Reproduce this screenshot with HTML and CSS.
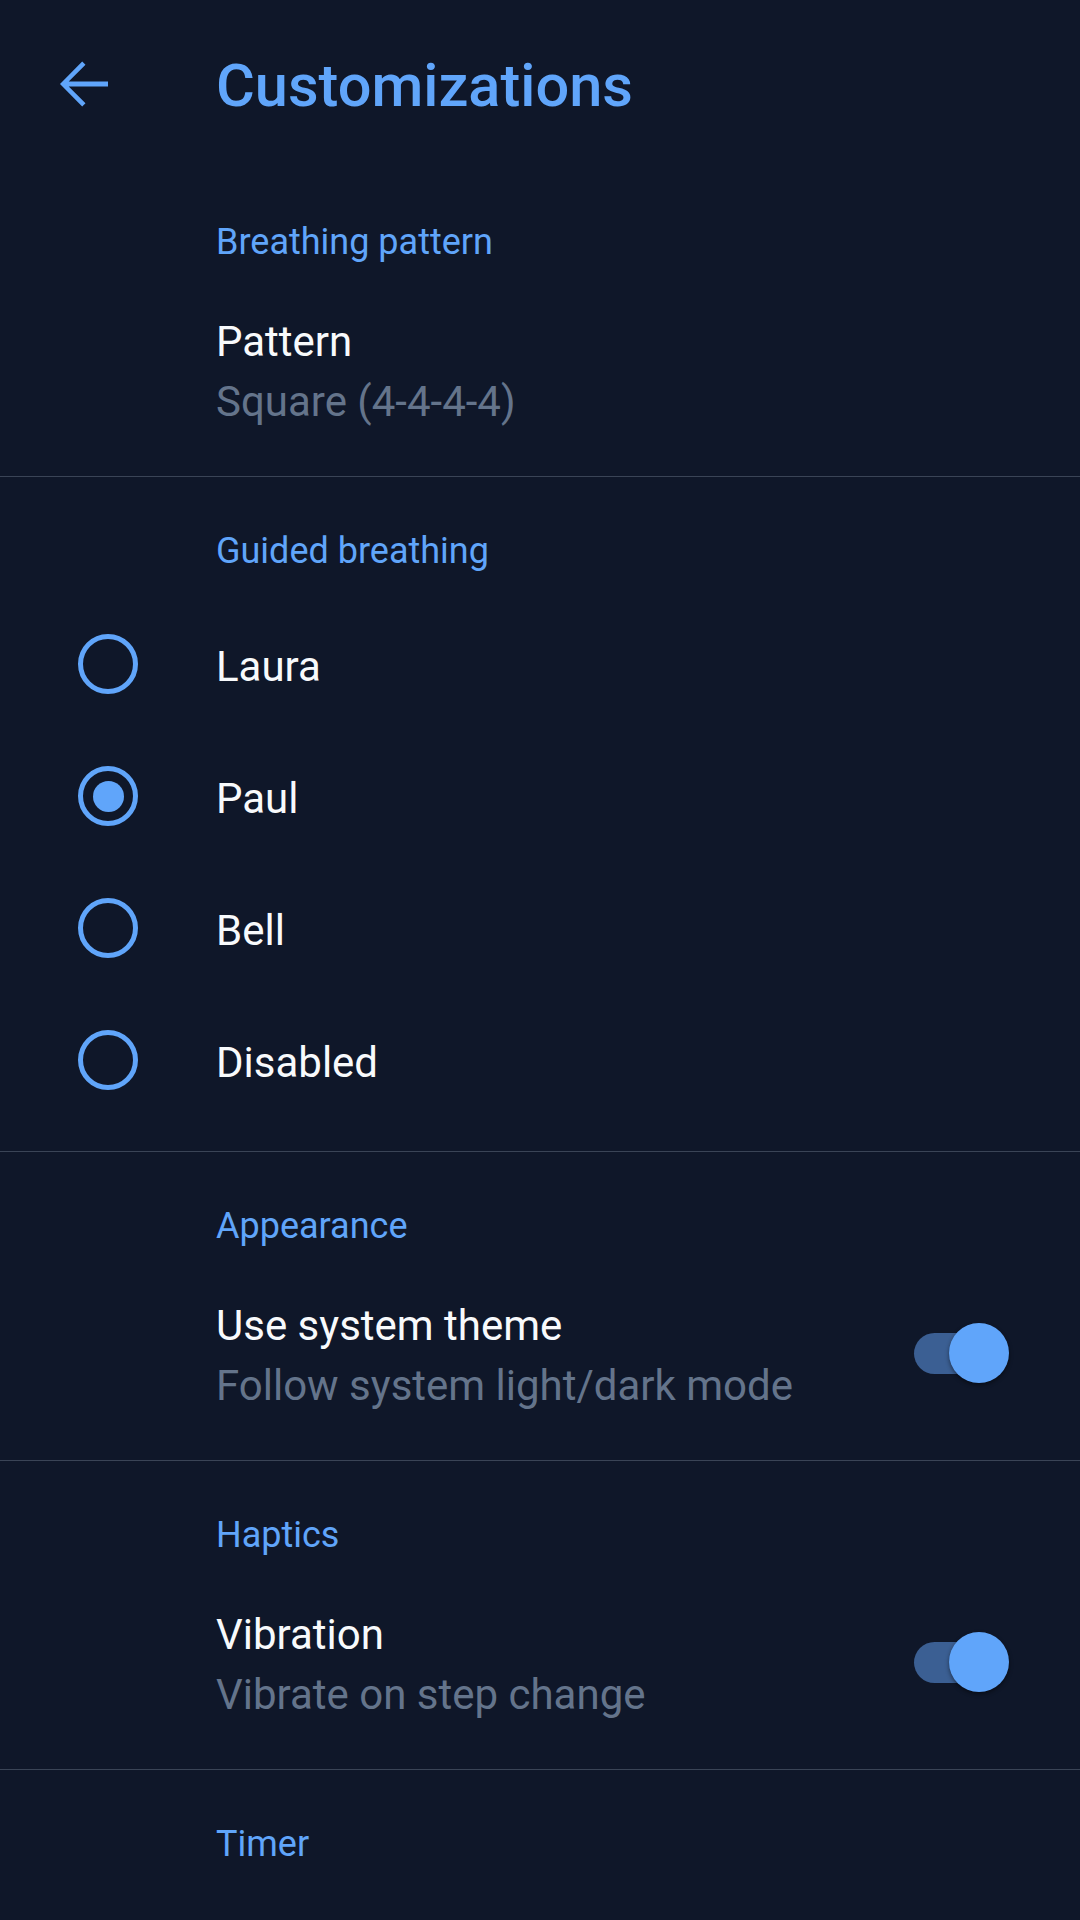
FILE: index.html
```html
<!DOCTYPE html>
<html lang="en">
<head>
<meta charset="utf-8">
<title>Customizations</title>
<link rel="stylesheet" href="styles.css">
</head>
<body>
<div class="screen">
  <header class="appbar">
    <button class="back" aria-label="Back">
      <svg viewBox="0 0 24 24" width="72" height="72"><path d="M20 11.2H6.9l5.6-5.6L11.4 4.5 4 12l7.4 7.5 1.1-1.1-5.6-5.6H20z" fill="#60a5fa"/></svg>
    </button>
    <h1 class="title">Customizations</h1>
  </header>

  <section class="group">
    <div class="group-label">Breathing pattern</div>
    <div class="pref">
      <div class="pref-text">
        <div class="pref-title">Pattern</div>
        <div class="pref-summary">Square (4-4-4-4)</div>
      </div>
    </div>
  </section>

  <section class="group">
    <div class="group-label">Guided breathing</div>
    <div class="radio-list">
      <div class="radio-row"><span class="radio"></span><span class="radio-label">Laura</span></div>
      <div class="radio-row"><span class="radio checked"></span><span class="radio-label">Paul</span></div>
      <div class="radio-row"><span class="radio"></span><span class="radio-label">Bell</span></div>
      <div class="radio-row"><span class="radio"></span><span class="radio-label">Disabled</span></div>
    </div>
  </section>

  <section class="group">
    <div class="group-label">Appearance</div>
    <div class="pref">
      <div class="pref-text">
        <div class="pref-title">Use system theme</div>
        <div class="pref-summary">Follow system light/dark mode</div>
      </div>
      <span class="switch on"><span class="track"></span><span class="thumb"></span></span>
    </div>
  </section>

  <section class="group">
    <div class="group-label">Haptics</div>
    <div class="pref">
      <div class="pref-text">
        <div class="pref-title">Vibration</div>
        <div class="pref-summary">Vibrate on step change</div>
      </div>
      <span class="switch on"><span class="track"></span><span class="thumb"></span></span>
    </div>
  </section>

  <section class="group last">
    <div class="group-label">Timer</div>
  </section>
</div>
</body>
</html>
```

FILE: styles.css
```css
* { box-sizing: border-box; }
html, body {
  margin: 0;
  padding: 0;
  background: #0f1729;
}
body {
  font-family: Roboto, "Noto Sans", "Liberation Sans", sans-serif;
  color: #f8fafc;
  width: 1080px;
  height: 1920px;
  overflow: hidden;
}
.screen {
  display: flex;
  flex-direction: column;
}
.appbar {
  height: 168px;
  display: flex;
  align-items: center;
}
.back {
  width: 72px;
  height: 72px;
  margin-left: 48px;
  padding: 0;
  border: 0;
  background: none;
  display: flex;
}
.title {
  margin: 0 0 0 96px;
  padding-top: 4px;
  font-size: 59.5px;
  font-weight: 500;
  line-height: 69px;
  color: #60a5fa;
}
.group {
  padding-top: 50px;
  border-bottom: 1px solid #3a4456;
}
.group.last { border-bottom: 0; }
.group-label {
  padding-left: 216px;
  font-size: 36px;
  line-height: 48px;
  color: #60a5fa;
}
.pref {
  display: flex;
  align-items: center;
  padding: 46px 71px 44px 216px;
}
.pref-text {
  flex: 1;
}
.pref-title {
  font-size: 42px;
  line-height: 60px;
  color: #f8fafc;
}
.pref-summary {
  font-size: 42px;
  line-height: 60px;
  color: #64748b;
}
.radio-list {
  padding: 23px 0 25px;
  display: flex;
  flex-direction: column;
}
.radio-row {
  height: 132px;
  display: flex;
  align-items: center;
}
.radio {
  width: 60px;
  height: 60px;
  margin-left: 78px;
  border: 5.5px solid #60a5fa;
  border-radius: 50%;
  display: flex;
  align-items: center;
  justify-content: center;
}
.radio.checked::after {
  content: "";
  width: 31px;
  height: 31px;
  border-radius: 50%;
  background: #60a5fa;
}
.radio-label {
  margin-left: 78px;
  padding-top: 6px;
  font-size: 42px;
  line-height: 60px;
  color: #f8fafc;
}
.switch {
  position: relative;
  width: 95px;
  height: 60px;
  margin-top: -6px;
  flex: none;
}
.track {
  position: absolute;
  left: 0;
  top: 10px;
  width: 90px;
  height: 41px;
  border-radius: 21px;
  background: #3b5f93;
}
.thumb {
  position: absolute;
  right: 0;
  top: 0;
  width: 60px;
  height: 60px;
  border-radius: 50%;
  background: #60a5fa;
  box-shadow: 0 2px 4px rgba(0, 0, 0, 0.45);
}
```
